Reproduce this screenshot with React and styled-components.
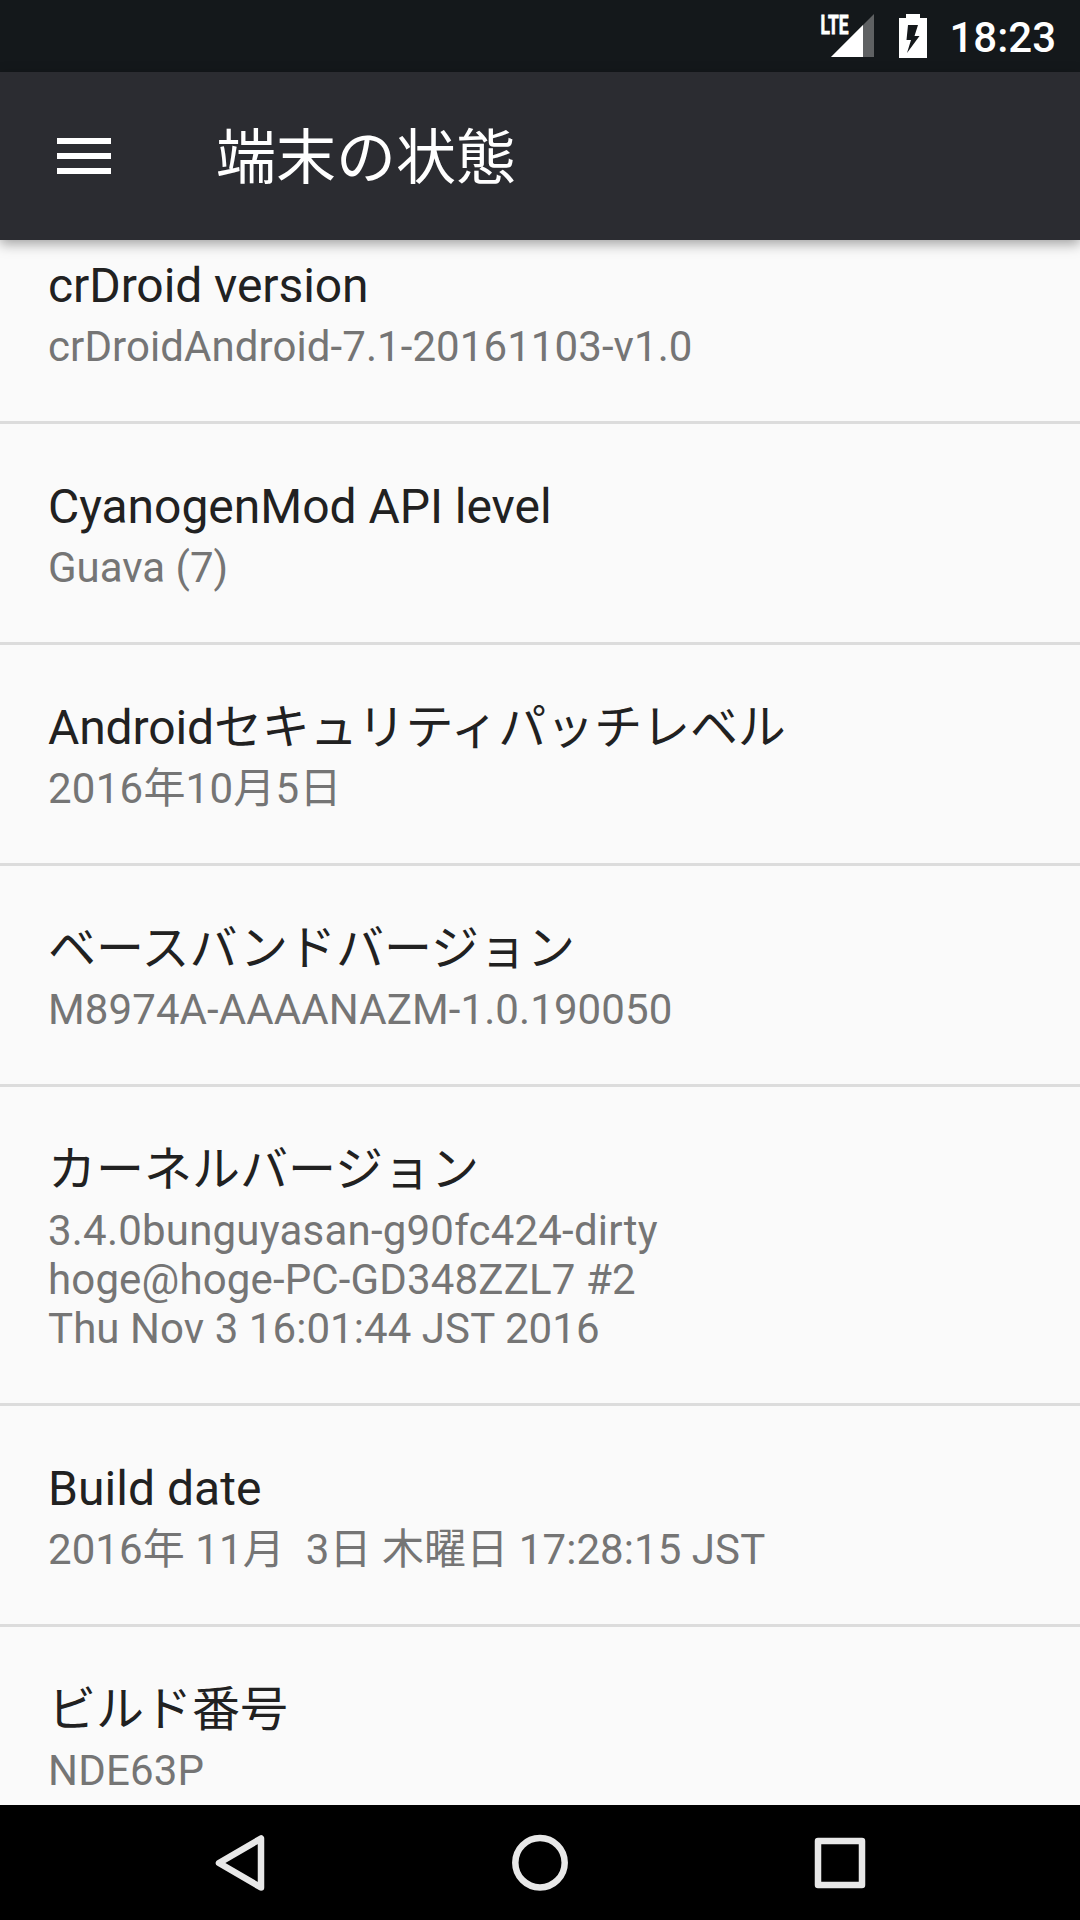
import { styled, createGlobalStyle } from "styled-components"

const GlobalStyle = createGlobalStyle`
    body {
        margin: 0;
        background: #FAFAFA;
        font-family: Roboto, "Noto Sans CJK JP", sans-serif;
    }
`

const Screen = styled.div`
    display: flex;
    flex-direction: column;
    width: 1080px;
    height: 1920px;
    overflow: hidden;
    background: #FAFAFA;
`

const StatusBar = styled.div`
    display: flex;
    flex: none;
    justify-content: flex-end;
    height: 72px;
    padding-right: 24px;
    box-sizing: border-box;
    background: #14181B;
`

const StatusIcon = styled.svg`
    flex: none;
    display: block;
`

const Clock = styled.time`
    margin-left: 16px;
    color: #FFF;
    font-size: 42px;
    font-weight: 500;
    line-height: 75px;
`

const AppBar = styled.header`
    display: flex;
    flex: none;
    align-items: center;
    height: 168px;
    padding-left: 57px;
    box-sizing: border-box;
    background: #2B2C31;
    box-shadow: 0 4px 12px rgba(0, 0, 0, 0.36);
    z-index: 1;
`

const MenuButton = styled.button`
    display: flex;
    flex-direction: column;
    gap: 9px;
    width: 54px;
    padding: 0;
    border: none;
    background: none;
`

const MenuBar = styled.span`
    height: 6px;
    background: #FFF;
`

const PageTitle = styled.h1`
    margin: 0 0 0 105px;
    padding-top: 5px;
    color: #FFF;
    font-size: 60px;
    font-weight: 400;
    line-height: 72px;
`

const List = styled.ul`
    flex: 1;
    min-height: 0;
    margin: 0;
    padding: 0;
    overflow: hidden;
    list-style: none;
`

const Row = styled.li`
    padding: 54px 48px 50px;
    border-bottom: 3px solid #DCDCDC;

    /* the list is scrolled a little, so the first row sits partly under the bar */
    &:first-child {
        margin-top: -37px;
    }
`

const RowTitle = styled.div`
    height: 65px;
    color: #212121;
    font-size: 48px;
    line-height: 57px;
    letter-spacing: ${(props) => props.$tracking || 0}px;
    white-space: nowrap;
`

const SummaryLine = styled.div`
    color: #757575;
    font-size: 42px;
    line-height: 49px;
    letter-spacing: ${(props) => props.$tracking || 0}px;
    white-space: pre;
`

const NavBar = styled.nav`
    display: flex;
    flex: none;
    justify-content: space-between;
    height: 115px;
    padding: 0 190px;
    box-sizing: border-box;
    background: #000;
`

const NavButton = styled.button`
    width: 100px;
    height: 115px;
    padding: 0;
    border: none;
    background: none;

    svg {
        display: block;
        fill: none;
        stroke: #E8E8E8;
        stroke-width: 6.5px;
        stroke-linejoin: round;
    }
`

const items = [
    {
        title: "crDroid version",
        tracking: -0.08,
        lines: [{ text: "crDroidAndroid-7.1-20161103-v1.0", tracking: 0.08 }],
    },
    {
        title: "CyanogenMod API level",
        tracking: -0.03,
        lines: [{ text: "Guava (7)" }],
    },
    {
        title: "Androidセキュリティパッチレベル",
        tracking: -0.12,
        lines: [{ text: "2016年10月5日", tracking: 0.24 }],
    },
    {
        title: "ベースバンドバージョン",
        lines: [{ text: "M8974A-AAAANAZM-1.0.190050", tracking: 0.1 }],
    },
    {
        title: "カーネルバージョン",
        lines: [
            { text: "3.4.0bunguyasan-g90fc424-dirty", tracking: 0.21 },
            { text: "hoge@hoge-PC-GD348ZZL7 #2", tracking: 0.15 },
            { text: "Thu Nov 3 16:01:44 JST 2016", tracking: 0.07 },
        ],
    },
    {
        title: "Build date",
        tracking: 0.05,
        lines: [{ text: "2016年 11月  3日 木曜日 17:28:15 JST", tracking: 0.08 }],
    },
    {
        title: "ビルド番号",
        lines: [{ text: "NDE63P", tracking: 0.2 }],
    },
]

const SignalIcon = () => (
    <StatusIcon width="60" height="72" viewBox="0 0 60 72">
        <path d="M57 14V57H14Z" fill="#5F6163" />
        <path d="M46 25V57H14Z" fill="#FFF" />
        <text x="3.500" y="33.500" fill="#FFF" stroke="#FFF" strokeWidth="0.8" fontSize="26" fontWeight="700" textLength="28" lengthAdjust="spacingAndGlyphs">LTE</text>
    </StatusIcon>
)

const BatteryIcon = () => (
    <StatusIcon width="56" height="72" viewBox="0 0 56 72">
        <path
            fill="#FFF"
            fillRule="evenodd"
            d="M29 14H43V18H50V58H22V18H29ZM31 25L29.500 40H34L30 53L42.500 36H37.500L41 25Z"
        />
    </StatusIcon>
)

const App = () => {
    return (
        <Screen>
            <GlobalStyle />
            <StatusBar>
                <SignalIcon />
                <BatteryIcon />
                <Clock>18:23</Clock>
            </StatusBar>
            <AppBar>
                <MenuButton aria-label="メニュー">
                    <MenuBar />
                    <MenuBar />
                    <MenuBar />
                </MenuButton>
                <PageTitle>端末の状態</PageTitle>
            </AppBar>
            <List>
                {items.map((item) => (
                    <Row key={item.title}>
                        <RowTitle $tracking={item.tracking}>{item.title}</RowTitle>
                        {item.lines.map((line) => (
                            <SummaryLine key={line.text} $tracking={line.tracking}>{line.text}</SummaryLine>
                        ))}
                    </Row>
                ))}
            </List>
            <NavBar>
                <NavButton aria-label="戻る">
                    <svg width="100" height="115" viewBox="0 0 100 115">
                        <path d="M29 58L71 33.500V82.500Z" />
                    </svg>
                </NavButton>
                <NavButton aria-label="ホーム">
                    <svg width="100" height="115" viewBox="0 0 100 115">
                        <circle cx="50" cy="57.700" r="24.700" />
                    </svg>
                </NavButton>
                <NavButton aria-label="アプリ履歴">
                    <svg width="100" height="115" viewBox="0 0 100 115">
                        <rect x="28" y="36" width="44" height="44" />
                    </svg>
                </NavButton>
            </NavBar>
        </Screen>
    )
}

export default App
